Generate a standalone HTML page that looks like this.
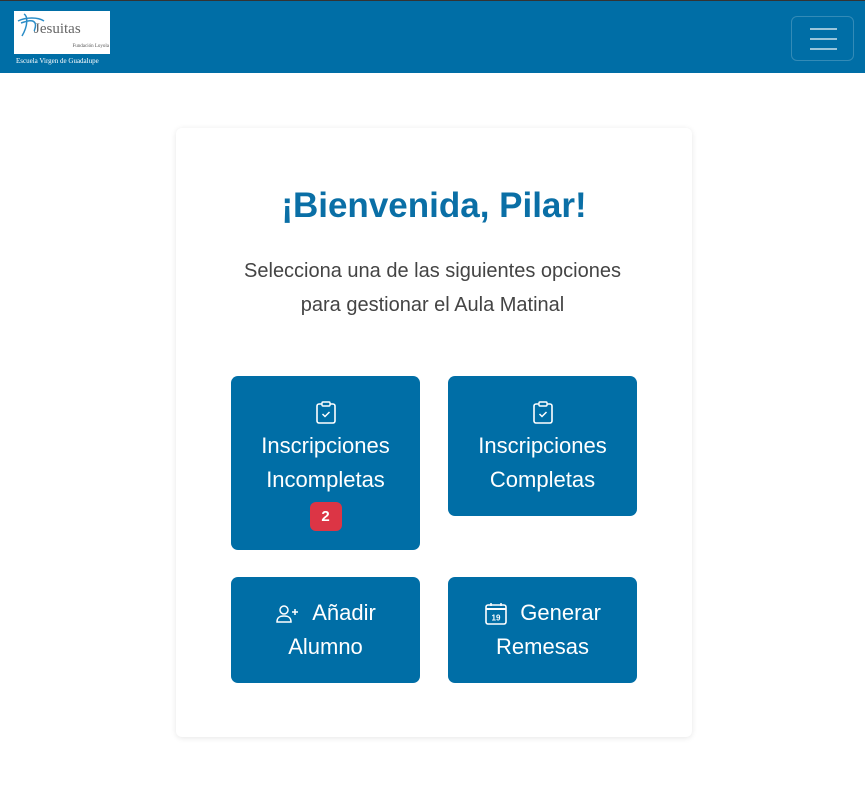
<!DOCTYPE html>
<html><head><meta charset="utf-8"><style>
*{box-sizing:border-box;margin:0;padding:0}
body{width:865px;height:788px;background:#fff;font-family:"Liberation Sans",sans-serif;position:relative;overflow:hidden}
.nav{position:absolute;left:0;top:0;width:865px;height:73px;background:#006ea6;border-top:1px solid #333}
.logo{position:absolute;left:14px;top:10px;width:96px;height:43px;background:#fff}
.logo .j{position:absolute;left:20px;top:10px;font-family:"Liberation Serif",serif;font-size:15px;color:#666}
.logo .f{position:absolute;right:1px;top:33px;font-family:"Liberation Serif",serif;font-size:5px;color:#555}
.esc{position:absolute;left:16px;top:56px;font-family:"Liberation Serif",serif;font-size:7px;color:#fff;white-space:nowrap}
.tog{position:absolute;left:791px;top:15px;width:63px;height:45px;border:1px solid rgba(255,255,255,.2);border-radius:6px}
.tog i{position:absolute;left:18px;width:27px;height:2px;background:rgba(255,255,255,.6)}
.card{position:absolute;left:176px;top:128px;width:516px;height:609px;border-radius:6px;box-shadow:0 1px 6px rgba(0,0,0,.1)}
h1{position:absolute;left:0;width:516px;top:186px;text-align:center;font-size:35px;color:#0a6fa6;font-weight:bold}
.sub{position:absolute;left:0;width:865px;top:254px;text-align:center;font-size:20px;line-height:34px;color:#444;font-weight:300}
.b{position:absolute;background:#006ea6;border-radius:7px;color:#fff;text-align:center;font-size:22px;line-height:34px;width:189px}
.badge{display:inline-block;background:#dc3545;color:#fff;font-weight:bold;font-size:15px;line-height:29px;width:32px;border-radius:6px;margin-top:0}
svg{vertical-align:middle}
</style></head><body>
<div class="nav">
<div class="logo"><svg width="30" height="30" style="position:absolute;left:2px;top:0"><path d="M8 3c4 2 4 12-2 22M5 12c6-2 12-4 14 0s-2 8 0 8M2 10c8-4 20-4 26 0" stroke="#2b8dc7" stroke-width="1.5" fill="none"/></svg><span class="j">Jesuitas</span><span class="f">Fundación Loyola</span></div>
<div class="esc">Escuela Virgen de Guadalupe</div>
<div class="tog"><i style="top:11px"></i><i style="top:21px"></i><i style="top:31px"></i></div>
</div>
<div class="card"></div>
<h1 style="left:176px">¡Bienvenida, Pilar!</h1>
<div class="sub">Selecciona una de las siguientes opciones<br>para gestionar el Aula Matinal</div>
<div class="b" style="left:231px;top:376px;height:174px;padding-top:19px">
<svg width="22" height="24" viewBox="0 0 22 24"><rect x="2" y="3" width="18" height="19" rx="2" fill="none" stroke="#fff" stroke-width="1.6"/><rect x="7" y="1" width="8" height="4" rx="1" fill="#006ea6" stroke="#fff" stroke-width="1.4"/><path d="M7.5 13l2.5 2.5 4.5-4.5" stroke="#fff" stroke-width="1.5" fill="none"/></svg><br>Inscripciones<br>Incompletas<br><span class="badge">2</span></div>
<div class="b" style="left:448px;top:376px;height:140px;padding-top:19px">
<svg width="22" height="24" viewBox="0 0 22 24"><rect x="2" y="3" width="18" height="19" rx="2" fill="none" stroke="#fff" stroke-width="1.6"/><rect x="7" y="1" width="8" height="4" rx="1" fill="#006ea6" stroke="#fff" stroke-width="1.4"/><path d="M7.5 13l2.5 2.5 4.5-4.5" stroke="#fff" stroke-width="1.5" fill="none"/></svg><br>Inscripciones<br>Completas</div>
<div class="b" style="left:231px;top:577px;height:106px;padding-top:19px">
<svg width="26" height="22" viewBox="0 0 26 22"><circle cx="9" cy="7" r="4" fill="none" stroke="#fff" stroke-width="1.5"/><path d="M2 19c0-5 3-6 7-6s7 1 7 6z" fill="none" stroke="#fff" stroke-width="1.5"/><path d="M20 6v6M17 9h6" stroke="#fff" stroke-width="1.5"/></svg>&nbsp; Añadir<br>Alumno</div>
<div class="b" style="left:448px;top:577px;height:106px;padding-top:19px">
<svg width="24" height="24" viewBox="0 0 24 24"><rect x="2" y="3" width="20" height="19" rx="2" fill="none" stroke="#fff" stroke-width="1.6"/><path d="M2 7h20" stroke="#fff" stroke-width="2"/><path d="M7 1v3M17 1v3" stroke="#fff" stroke-width="1.5"/><text x="12" y="18.5" font-size="8" fill="#fff" text-anchor="middle" font-family="Liberation Sans" font-weight="bold">19</text></svg>&nbsp; Generar<br>Remesas</div>
</body></html>
